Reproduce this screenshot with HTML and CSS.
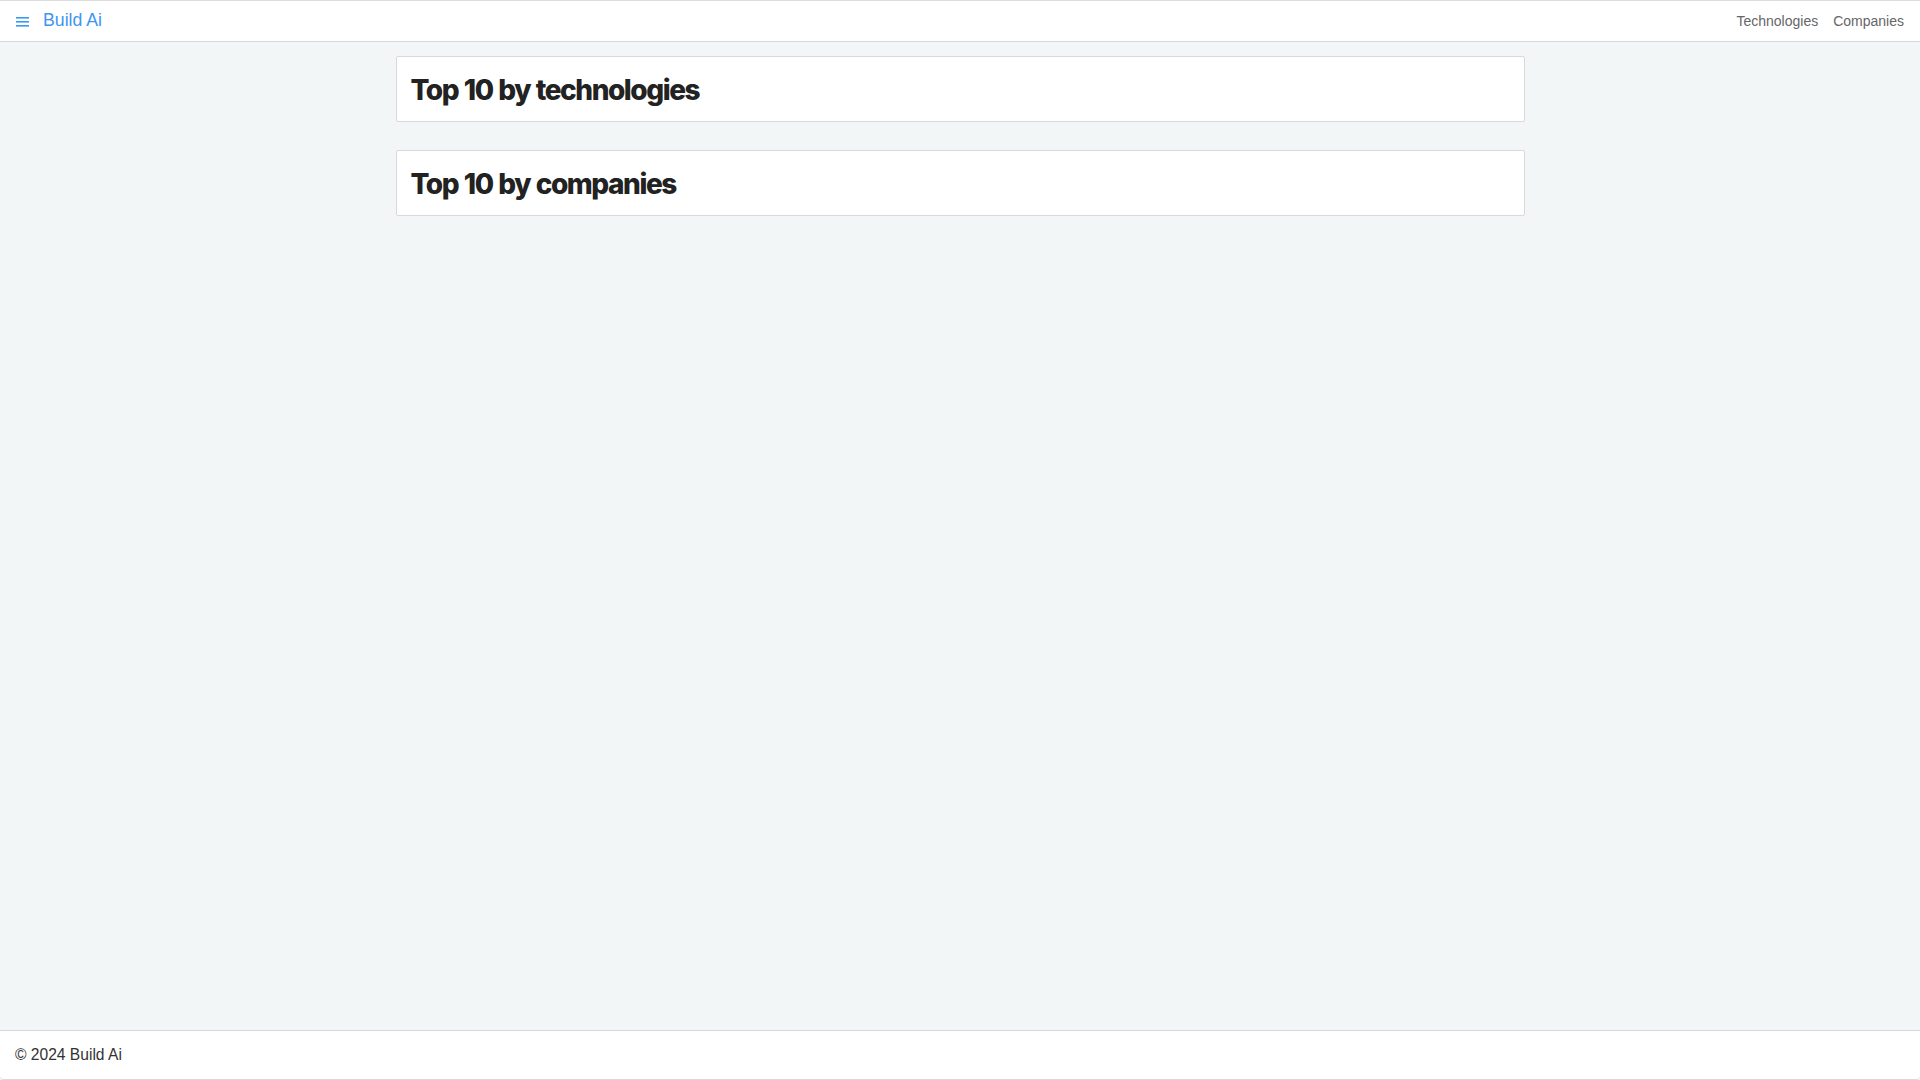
FILE: index.html
```html
<!DOCTYPE html>
<html lang="en">
<head>
<meta charset="utf-8">
<title>Build Ai</title>
<link rel="stylesheet" href="styles.css">
</head>
<body>
<div class="page">
  <header class="topbar">
    <div class="brand">
      <svg class="menu-icon" width="13" height="10" viewBox="0 0 13 10" aria-hidden="true">
        <rect x="0" y="0" width="13" height="1.6" fill="#3b99f6"/>
        <rect x="0" y="4" width="13" height="1.6" fill="#3b99f6"/>
        <rect x="0" y="8" width="13" height="1.6" fill="#3b99f6"/>
      </svg>
      <span class="brand-name">Build Ai</span>
    </div>
    <nav class="nav">
      <a class="nav-link" href="#">Technologies</a>
      <a class="nav-link" href="#">Companies</a>
    </nav>
  </header>
  <main class="content">
    <section class="card"><h2 class="card-title">Top 10 by technologies</h2></section>
    <section class="card"><h2 class="card-title">Top 10 by companies</h2></section>
  </main>
  <footer class="footer">© 2024 Build Ai</footer>
</div>
</body>
</html>
```
FILE: styles.css
```css
html, body {
  margin: 0;
  padding: 0;
}
body {
  background: #f3f6f7;
  font-family: "Liberation Sans", Arial, sans-serif;
  color: #333;
}
.page {
  min-height: 100vh;
  display: flex;
  flex-direction: column;
  box-sizing: border-box;
}
.topbar {
  height: 42px;
  box-sizing: border-box;
  background: #fff;
  border-top: 1px solid #dcdcdc;
  border-bottom: 1px solid #d8d8d8;
  display: flex;
  align-items: center;
  justify-content: space-between;
  padding: 0 16px 0 16px;
}
.brand {
  display: flex;
  align-items: center;
  gap: 14px;
}
.menu-icon {
  display: block;
  margin-top: 1px;
}
.brand-name {
  font-size: 17.7px;
  color: #3d95f2;
  margin-bottom: 2px;
}
.nav {
  display: flex;
  gap: 15px;
}
.nav-link {
  font-size: 14px;
  color: #666;
  text-decoration: none;
}
.content {
  flex: 1;
  width: 1129px;
  margin: 0 auto;
  padding-top: 14px;
  display: flex;
  flex-direction: column;
  gap: 28px;
}
.card {
  background: #fff;
  border: 1px solid #d9d9d9;
  border-radius: 2px;
  height: 66px;
  box-sizing: border-box;
  display: flex;
  align-items: center;
  padding: 0 14px;
}
.card-title {
  margin: 0;
  font-family: Inter, "Liberation Sans", sans-serif;
  font-weight: 800;
  font-size: 28px;
  letter-spacing: -1.45px;
  word-spacing: 1px;
  color: #222;
  padding-top: 1px;
}
.footer {
  height: 50px;
  box-sizing: border-box;
  background: #fff;
  border-top: 1px solid #d8d8d8;
  border-bottom: 1px solid #d8d8d8;
  border-radius: 0 0 4px 4px;
  display: flex;
  align-items: center;
  padding: 0 15px;
  font-size: 15.6px;
  color: #333;
}
```
